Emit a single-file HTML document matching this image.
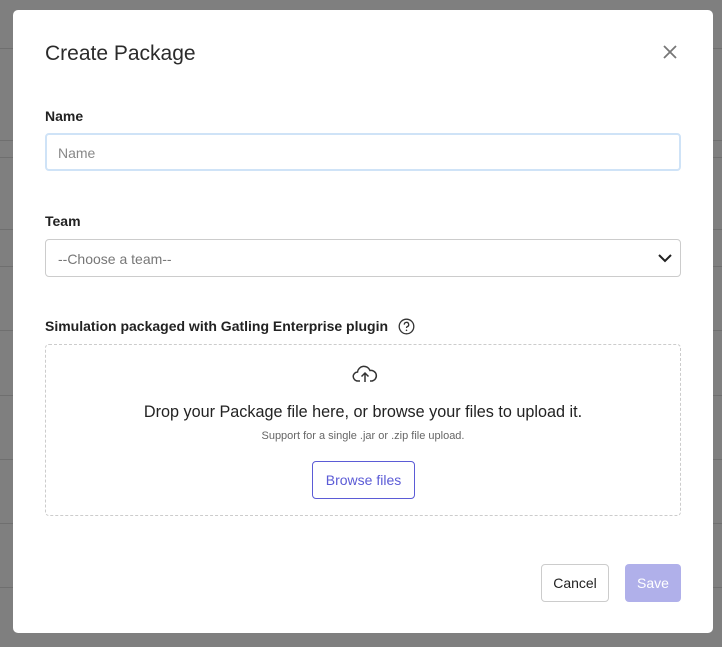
<!DOCTYPE html>
<html><head><style>
*{box-sizing:border-box;margin:0;padding:0}
body{width:722px;height:647px;background:#7f7f7f;position:relative;overflow:hidden;font-family:"Liberation Sans",sans-serif;color:#222}
.ln{position:absolute;height:1px;background:#6f6f6f;left:0;width:722px}
.modal{position:absolute;left:13px;top:10px;width:700px;height:623px;background:#fff;border-radius:5px}
.t{position:absolute;left:32px;top:32px;font-size:21px;color:#2b2b2b}
.x{position:absolute;left:650px;top:35px}
.lbl{position:absolute;left:32px;font-size:14px;font-weight:bold;color:#222}
.inp{position:absolute;left:32px;width:636px;height:38px;border:1px solid #ccc;border-radius:4px;font-size:14px;color:#888;padding:11px 12px}
.drop{position:absolute;left:32px;top:334px;width:636px;height:172px;border:1px dashed #ccc;border-radius:4px;text-align:center}
.btn{position:absolute;border-radius:4px;font-size:14px;text-align:center}
</style></head><body>
<div class="ln" style="top:48px"></div><div class="ln" style="top:140px"></div><div class="ln" style="top:157px"></div><div class="ln" style="top:229px"></div><div class="ln" style="top:266px"></div><div class="ln" style="top:330px"></div><div class="ln" style="top:395px"></div><div class="ln" style="top:459px"></div><div class="ln" style="top:523px"></div><div class="ln" style="top:587px"></div>
<div class="modal">
<div class="t">Create Package</div>
<svg class="x" width="14" height="14" viewBox="0 0 14 14"><path d="M1 1L13 13M13 1L1 13" stroke="#777" stroke-width="1.8"/></svg>
<div class="lbl" style="top:98px">Name</div>
<div class="inp" style="top:123px;border:2px solid #cfe3f7;padding:10px 11px">Name</div>
<div class="lbl" style="top:203px">Team</div>
<div class="inp" style="top:229px;color:#777">--Choose a team--
<svg style="position:absolute;right:8px;top:13px" width="14" height="10" viewBox="0 0 14 10"><path d="M1 2L7 8L13 2" stroke="#222" stroke-width="2" fill="none"/></svg></div>
<div class="lbl" style="top:308px">Simulation packaged with Gatling Enterprise plugin
<svg style="vertical-align:-4px;margin-left:6px" width="17" height="17" viewBox="0 0 17 17"><circle cx="8.5" cy="8.5" r="7.3" stroke="#333" stroke-width="1.3" fill="none"/><path d="M6.3 6.6a2.2 2.2 0 1 1 3 2c-.6.3-.8.7-.8 1.4" stroke="#333" stroke-width="1.3" fill="none"/><circle cx="8.5" cy="12.3" r=".8" fill="#333"/></svg></div>
<div class="drop">
<svg style="position:absolute;left:306px;top:20px" width="26" height="18" viewBox="0 0 26 18"><path d="M8 16H6a4.5 4.5 0 0 1-.5-9A6.5 6.5 0 0 1 18 5.5a5 5 0 0 1 2 10.5h-2" stroke="#333" stroke-width="1.5" fill="none"/><path d="M13 17V8M9.5 11.5L13 8l3.5 3.5" stroke="#333" stroke-width="1.5" fill="none"/></svg>
<div style="position:absolute;top:58px;width:100%;font-size:16.2px;color:#222">Drop your Package file here, or browse your files to upload it.</div>
<div style="position:absolute;top:85px;width:100%;font-size:11px;color:#666">Support for a single .jar or .zip file upload.</div>
<div class="btn" style="left:266px;top:116px;width:103px;height:38px;border:1px solid #5b5bd6;color:#5b5bd6;line-height:36px">Browse files</div>
</div>
<div class="btn" style="left:528px;top:554px;width:68px;height:38px;border:1px solid #ccc;line-height:36px;color:#222">Cancel</div>
<div class="btn" style="left:612px;top:554px;width:56px;height:38px;background:#b0b0ea;color:#fff;line-height:38px">Save</div>
</div>
</body></html>
